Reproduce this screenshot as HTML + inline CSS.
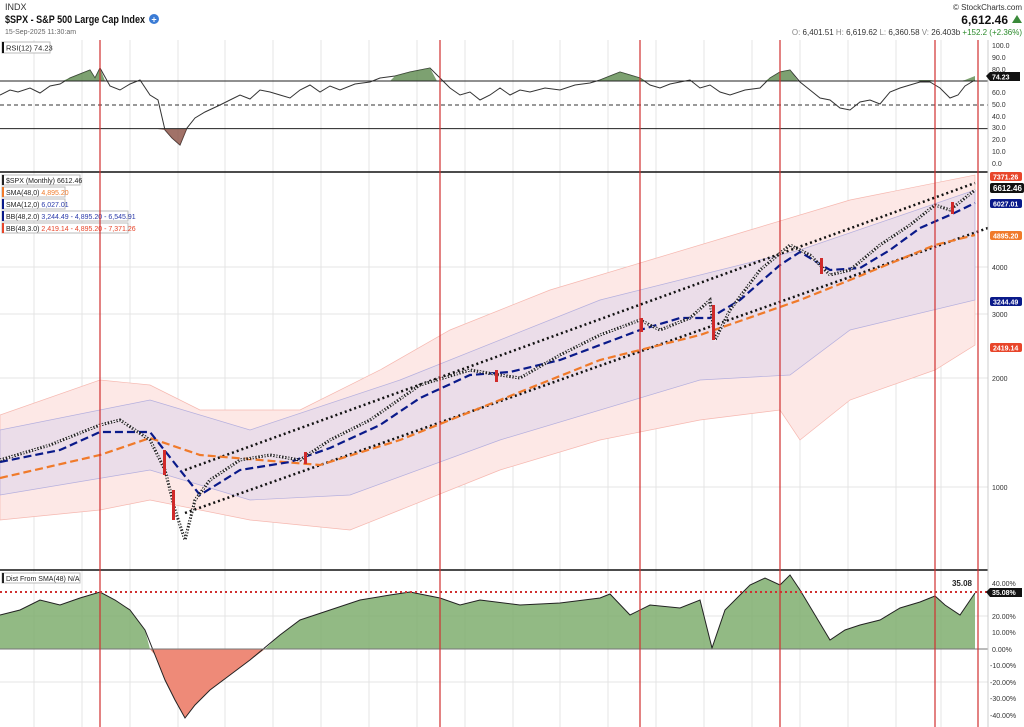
<!DOCTYPE html>
<html><head><meta charset="utf-8"><style>
body{margin:0;background:#fff;width:1024px;height:727px;overflow:hidden;font-family:"Liberation Sans",sans-serif}
svg{position:absolute;left:0;top:0}
</style></head><body>
<svg width="1024" height="727" viewBox="0 0 1024 727" font-family="Liberation Sans, sans-serif">
<rect width="1024" height="727" fill="#fff"/>
<!-- header -->
<text x="5" y="10" font-size="9" fill="#333">INDX</text>
<text x="5" y="23" font-size="11" font-weight="bold" fill="#111" textLength="140" lengthAdjust="spacingAndGlyphs">$SPX - S&amp;P 500 Large Cap Index</text>
<circle cx="154" cy="19" r="5" fill="#3a7bd5"/><text x="154" y="22.5" font-size="9" fill="#fff" text-anchor="middle" font-weight="bold">+</text>
<text x="5" y="34" font-size="7" fill="#666">15-Sep-2025 11:30:am</text>
<text x="1022" y="10" font-size="8" fill="#333" text-anchor="end">© StockCharts.com</text>
<text x="1008" y="24" font-size="12" font-weight="bold" fill="#111" text-anchor="end">6,612.46</text>
<path d="M1012 23 L1017 15 L1022 23Z" fill="#3a8a3a"/>
<text x="1022" y="35" font-size="8" fill="#333" text-anchor="end"><tspan fill="#888">O:</tspan> 6,401.51  <tspan fill="#888">H:</tspan> 6,619.62  <tspan fill="#888">L:</tspan> 6,360.58  <tspan fill="#888">V:</tspan> 26.403b <tspan fill="#2a8a2a">+152.2 (+2.36%)</tspan></text>
<!-- grid -->
<g stroke="#e4e4e4" stroke-width="1">
<line x1="34" y1="40" x2="34" y2="727"/><line x1="82" y1="40" x2="82" y2="727"/><line x1="130" y1="40" x2="130" y2="727"/><line x1="178" y1="40" x2="178" y2="727"/><line x1="225" y1="40" x2="225" y2="727"/><line x1="273" y1="40" x2="273" y2="727"/><line x1="321" y1="40" x2="321" y2="727"/><line x1="369" y1="40" x2="369" y2="727"/><line x1="417" y1="40" x2="417" y2="727"/><line x1="465" y1="40" x2="465" y2="727"/><line x1="513" y1="40" x2="513" y2="727"/><line x1="560" y1="40" x2="560" y2="727"/><line x1="608" y1="40" x2="608" y2="727"/><line x1="656" y1="40" x2="656" y2="727"/><line x1="704" y1="40" x2="704" y2="727"/><line x1="752" y1="40" x2="752" y2="727"/><line x1="800" y1="40" x2="800" y2="727"/><line x1="848" y1="40" x2="848" y2="727"/><line x1="896" y1="40" x2="896" y2="727"/><line x1="941" y1="40" x2="941" y2="727"/>
<line x1="0" y1="267" x2="988" y2="267"/><line x1="0" y1="314" x2="988" y2="314"/><line x1="0" y1="378" x2="988" y2="378"/><line x1="0" y1="487" x2="988" y2="487"/>
<line x1="0" y1="616" x2="988" y2="616"/><line x1="0" y1="682" x2="988" y2="682"/>
</g>
<!-- RSI panel -->
<path d="M0 95 L10 90 L18 92 L30 88 L40 93 L50 86 L60 84 L70 78 L80 74 L90 70 L95 78 L100 68 L110 86 L120 90 L130 84 L140 80 L150 95 L158 100 L165 130 L172 138 L180 145 L187 128 L195 118 L205 112 L220 105 L230 100 L240 95 L250 99 L260 90 L270 92 L280 95 L290 98 L300 90 L310 85 L320 92 L330 86 L340 90 L355 84 L370 82 L380 78 L395 76 L410 72 L420 70 L430 68 L440 78 L450 88 L460 95 L470 92 L480 100 L490 95 L500 88 L510 95 L520 90 L530 92 L545 88 L560 90 L575 85 L590 83 L600 80 L610 76 L620 72 L630 75 L640 78 L650 85 L660 88 L670 84 L680 82 L690 80 L700 88 L710 85 L720 92 L730 95 L745 90 L760 88 L770 78 L780 72 L790 70 L800 82 L810 90 L820 98 L830 100 L840 108 L850 110 L860 102 L870 100 L880 104 L890 92 L900 88 L910 85 L920 82 L930 82 L940 88 L950 98 L958 95 L965 86 L975 80" fill="none" stroke="#333" stroke-width="1"/>
<path d="M62 81 L70 78 L80 74 L90 70 L95 78 L100 68 L105 81Z" fill="#5d8a4e" opacity=".8"/>
<path d="M155 128.6 L165 130 L172 138 L180 145 L187 128.6Z" fill="#8a4f42" opacity=".8"/>
<path d="M390 81 L395 76 L410 72 L420 70 L430 68 L437 81Z M596 81 L600 80 L610 76 L620 72 L630 75 L640 78 L646 81Z M765 81 L770 78 L780 72 L790 70 L798 81Z M915 81 L920 80 L930 80 L938 81Z M960 81 L965 80 L975 76 L975 81Z" fill="#5d8a4e" opacity=".8"/>
<line x1="0" y1="81" x2="988" y2="81" stroke="#222"/><line x1="0" y1="128.6" x2="988" y2="128.6" stroke="#222"/>
<line x1="0" y1="105" x2="988" y2="105" stroke="#333" stroke-dasharray="4,3"/>
<rect x="2" y="42" width="48" height="11" fill="#fff" stroke="#bbb"/><rect x="2" y="42" width="2" height="11" fill="#111"/>
<text x="6" y="50.5" font-size="7.5" fill="#222">RSI(12) 74.23</text>
<line x1="0" y1="172" x2="988" y2="172" stroke="#111" stroke-width="1.5"/>
<!-- main bands -->
<path d="M0 415 L100 380 L150 385 L200 410 L300 410 L380 370 L450 330 L550 290 L650 260 L750 230 L850 200 L975 175 L975 345 L935 370 L850 400 L800 440 L780 410 L700 420 L600 440 L500 470 L400 510 L350 530 L250 520 L150 500 L100 510 L0 520Z" fill="#fde8e6" stroke="#f6b8b0" stroke-width=".7"/>
<path d="M0 430 L150 400 L250 430 L400 380 L600 300 L800 250 L975 190 L975 300 L850 330 L790 375 L700 380 L500 440 L350 495 L250 500 L150 470 L0 495Z" fill="#e8dcea" stroke="#a9a6dd" stroke-width=".7" opacity=".85"/>
<!-- channel -->
<line x1="185" y1="470" x2="975" y2="183" stroke="#111" stroke-width="2.5" stroke-dasharray="2,3"/>
<line x1="185" y1="513" x2="988" y2="228" stroke="#111" stroke-width="2.5" stroke-dasharray="2,3"/>
<!-- SMAs -->
<path d="M0 478 L100 455 L150 438 L200 455 L260 460 L320 465 L400 440 L500 400 L600 360 L700 335 L800 300 L850 280 L935 245 L975 235" fill="none" stroke="#f07a2a" stroke-width="2.2" stroke-dasharray="8,4"/>
<path d="M0 462 L60 450 L100 432 L150 432 L180 470 L200 495 L240 470 L290 462 L330 448 L380 425 L420 398 L470 375 L510 372 L560 360 L600 345 L640 330 L680 318 L710 318 L740 300 L780 265 L800 252 L830 270 L860 268 L890 250 L920 228 L950 215 L975 203" fill="none" stroke="#0a1a8a" stroke-width="2.2" stroke-dasharray="8,4"/>
<!-- price -->
<path d="M0 460 L50 445 L100 425 L120 420 L150 440 L165 470 L175 510 L185 540 L195 500 L210 480 L240 460 L270 455 L300 460 L330 440 L370 420 L420 385 L470 370 L500 375 L520 378 L560 355 L600 335 L640 320 L660 330 L690 318 L710 300 L715 340 L730 310 L760 270 L790 245 L810 255 L830 275 L850 270 L880 245 L910 225 L935 205 L950 210 L975 190" fill="none" stroke="#222" stroke-width="3" stroke-dasharray="1.5,1.5"/>
<path d="M0 460 L50 445 L100 425 L120 420 L150 440 L165 470 L175 510 L185 540 L195 500 L210 480 L240 460 L270 455 L300 460 L330 440 L370 420 L420 385 L470 370 L500 375 L520 378 L560 355 L600 335 L640 320 L660 330 L690 318 L710 300 L715 340 L730 310 L760 270 L790 245 L810 255 L830 275 L850 270 L880 245 L910 225 L935 205 L950 210 L975 190" fill="none" stroke="#fff" stroke-width="1" stroke-dasharray="1.5,2.5"/>
<g fill="#d02a2a"><rect x="163" y="450" width="3" height="25"/><rect x="172" y="490" width="3" height="30"/><rect x="304" y="452" width="3" height="12"/><rect x="495" y="370" width="3" height="12"/><rect x="712" y="305" width="3" height="35"/><rect x="820" y="258" width="3" height="16"/><rect x="951" y="202" width="3" height="12"/><rect x="640" y="318" width="3" height="14"/></g>
<!-- legends -->
<g font-size="7" >
<rect x="2" y="175" width="78" height="10" fill="#fff" stroke="#bbb"/><rect x="2" y="175" width="2" height="10" fill="#222"/><text x="6" y="183" fill="#222">$SPX (Monthly) 6612.46</text>
<rect x="2" y="187" width="63" height="10" fill="#fff" stroke="#bbb"/><rect x="2" y="187" width="2" height="10" fill="#f07a2a"/><text x="6" y="195" fill="#222">SMA(48,0) <tspan fill="#f07a2a">4,895.20</tspan></text>
<rect x="2" y="199" width="63" height="10" fill="#fff" stroke="#bbb"/><rect x="2" y="199" width="2" height="10" fill="#0a1a8a"/><text x="6" y="207" fill="#222">SMA(12,0) <tspan fill="#2a3aaa">6,027.01</tspan></text>
<rect x="2" y="211" width="126" height="10" fill="#fff" stroke="#bbb"/><rect x="2" y="211" width="2" height="10" fill="#0a1a8a"/><text x="6" y="219" fill="#222">BB(48,2.0) <tspan fill="#2a3aaa">3,244.49 - 4,895.20 - 6,545.91</tspan></text>
<rect x="2" y="223" width="126" height="10" fill="#fff" stroke="#bbb"/><rect x="2" y="223" width="2" height="10" fill="#e8452a"/><text x="6" y="231" fill="#222">BB(48,3.0) <tspan fill="#e8452a">2,419.14 - 4,895.20 - 7,371.26</tspan></text>
</g>
<line x1="0" y1="570" x2="988" y2="570" stroke="#111" stroke-width="1.5"/>
<!-- dist panel -->
<path d="M0 649 L0 615 L20 610 L40 600 L60 605 L80 598 L100 592 L115 600 L130 610 L145 630 L150 649 L155 655 L165 680 L175 700 L185 718 L195 705 L210 690 L230 675 L250 660 L265 649 L280 635 L300 620 L330 610 L360 600 L390 595 L410 592 L440 598 L460 605 L480 600 L520 605 L560 603 L600 598 L610 594 L630 615 L650 605 L680 608 L700 600 L712 648 L725 610 L750 585 L765 578 L780 585 L790 575 L800 590 L815 615 L830 640 L845 630 L860 625 L880 620 L900 608 L920 602 L935 596 L945 605 L960 615 L975 593 L975 649Z" fill="#7fae6f" opacity=".85"/>
<path d="M150 649 L155 655 L165 680 L175 700 L185 718 L195 705 L210 690 L230 675 L250 660 L265 649Z" fill="#ee8a78"/>
<path d="M0 615 L20 610 L40 600 L60 605 L80 598 L100 592 L115 600 L130 610 L145 630 L155 655 L165 680 L175 700 L185 718 L195 705 L210 690 L230 675 L250 660 L280 635 L300 620 L330 610 L360 600 L390 595 L410 592 L440 598 L460 605 L480 600 L520 605 L560 603 L600 598 L610 594 L630 615 L650 605 L680 608 L700 600 L712 648 L725 610 L750 585 L765 578 L780 585 L790 575 L800 590 L815 615 L830 640 L845 630 L860 625 L880 620 L900 608 L920 602 L935 596 L945 605 L960 615 L975 593" fill="none" stroke="#222" stroke-width="1"/>
<line x1="0" y1="649" x2="988" y2="649" stroke="#777"/>
<line x1="0" y1="592" x2="988" y2="592" stroke="#d03030" stroke-width="2" stroke-dasharray="2,3"/>
<text x="972" y="586" font-size="8" font-weight="bold" fill="#222" text-anchor="end">35.08</text>
<rect x="2" y="573" width="78" height="10" fill="#fff" stroke="#bbb"/><rect x="2" y="573" width="2" height="10" fill="#222"/><text x="6" y="581" font-size="7" fill="#222">Dist From SMA(48) N/A</text>
<!-- red vertical lines -->
<g stroke="#d03030" stroke-width="1.2"><line x1="100" y1="40" x2="100" y2="727"/><line x1="440" y1="40" x2="440" y2="727"/><line x1="640" y1="40" x2="640" y2="727"/><line x1="780" y1="40" x2="780" y2="727"/><line x1="935" y1="40" x2="935" y2="727"/><line x1="978" y1="40" x2="978" y2="727"/></g>
<!-- axis -->
<line x1="988" y1="40" x2="988" y2="727" stroke="#ccc"/>
<g font-size="7" fill="#333">
<text x="992" y="48">100.0</text><text x="992" y="60">90.0</text><text x="992" y="72">80.0</text><text x="992" y="95">60.0</text><text x="992" y="107">50.0</text><text x="992" y="119">40.0</text><text x="992" y="130">30.0</text><text x="992" y="142">20.0</text><text x="992" y="154">10.0</text><text x="992" y="166">0.0</text>
<text x="992" y="270">4000</text><text x="992" y="317">3000</text><text x="992" y="381">2000</text><text x="992" y="490">1000</text>
<text x="992" y="586">40.00%</text><text x="992" y="619">20.00%</text><text x="992" y="635">10.00%</text><text x="992" y="652">0.00%</text><text x="990" y="668">-10.00%</text><text x="990" y="685">-20.00%</text><text x="990" y="701">-30.00%</text><text x="990" y="718">-40.00%</text>
</g>
<g font-size="7" font-weight="bold" fill="#fff">
<path d="M986 76 L990 72 L1020 72 L1020 81 L990 81Z" fill="#111"/><text x="992" y="79.5">74.23</text>
<rect x="990" y="172" width="32" height="9" rx="2" fill="#e8452a"/><text x="993" y="179.5">7371.26</text>
<rect x="990" y="183" width="34" height="10" rx="2" fill="#111"/><text x="993" y="191" font-size="8">6612.46</text>
<rect x="990" y="199" width="32" height="9" rx="2" fill="#0a1a8a"/><text x="993" y="206.5">6027.01</text>
<rect x="990" y="231" width="32" height="9" rx="2" fill="#f07a2a"/><text x="993" y="238.5">4895.20</text>
<rect x="990" y="297" width="32" height="9" rx="2" fill="#0a1a8a"/><text x="993" y="304.5">3244.49</text>
<rect x="990" y="343" width="32" height="9" rx="2" fill="#e8452a"/><text x="993" y="350.5">2419.14</text>
<path d="M986 592 L990 588 L1022 588 L1022 597 L990 597Z" fill="#111"/><text x="992" y="595">35.08%</text>
</g>
</svg>
</body></html>
